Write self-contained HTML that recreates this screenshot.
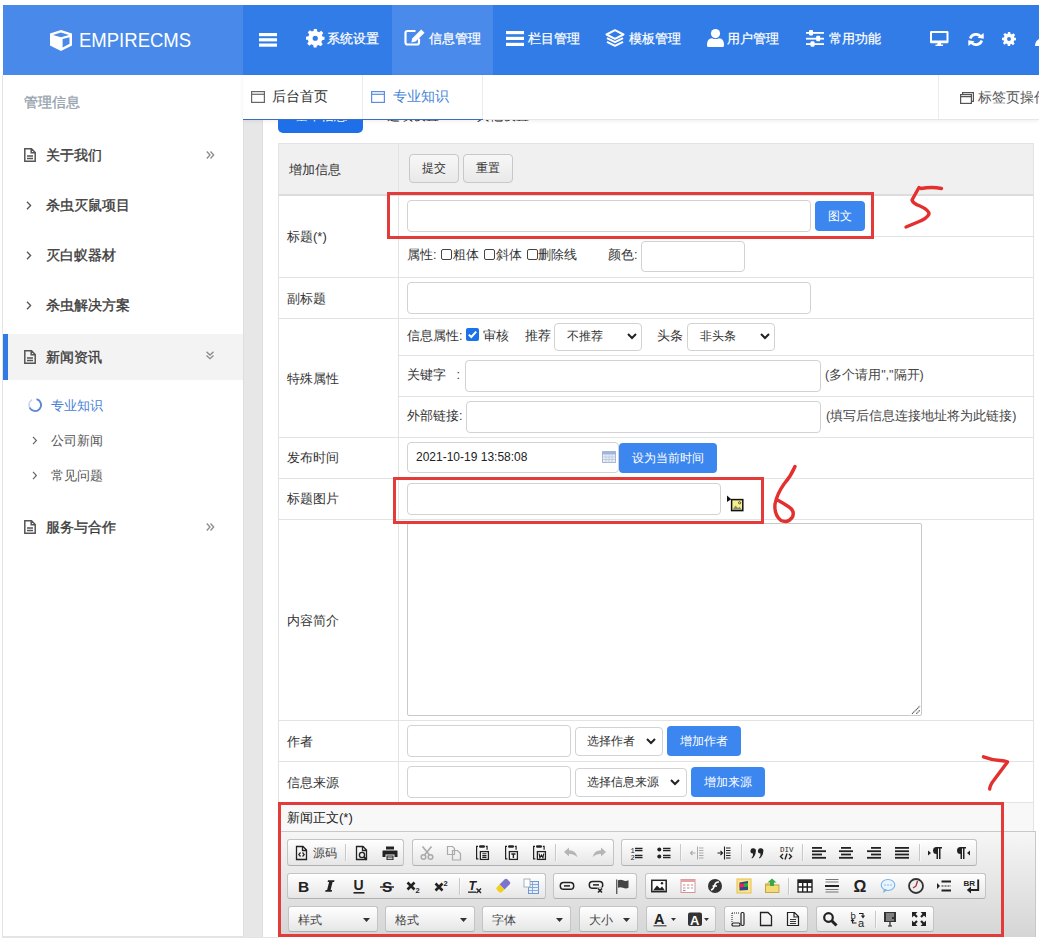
<!DOCTYPE html>
<html><head><meta charset="utf-8">
<style>
*{box-sizing:border-box;margin:0;padding:0}
html,body{width:1039px;height:940px;overflow:hidden;background:#fff;font-family:"Liberation Sans",sans-serif;color:#333}
.a{position:absolute}
svg{position:absolute;overflow:visible}
#hdr{left:3px;top:5px;width:1036px;height:70px;background:#317ce6}
#logo{left:3px;top:5px;width:240px;height:70px;background:#4989ea}
.nav{position:absolute;color:#fff;font-size:13px;top:31px;line-height:15px;white-space:nowrap;-webkit-text-stroke:0.25px #fff}
#act{left:392px;top:5px;width:101px;height:70px;background:#4a8aea}
#side{left:2px;top:75px;width:241px;height:862px;background:#fff;border-left:1px solid #e4e4e4;border-bottom:1px solid #e4e4e4}
#gap{left:243px;top:120px;width:20px;height:817px;background:#e7e7e7;box-shadow:inset 1px 0 0 #dedede,inset -1px 0 0 #dedede}
#tabs{left:243px;top:75px;width:796px;height:45px;background:#fff;border-bottom:1px solid #e6e6e6;box-shadow:0 1px 4px rgba(0,0,0,.07)}
.s1{position:absolute;font-size:14px;font-weight:normal;-webkit-text-stroke:0.35px #3a3a3a;color:#3a3a3a;line-height:16px;white-space:nowrap}
.s2{position:absolute;font-size:13px;color:#555;line-height:15px;white-space:nowrap}
.lbl{position:absolute;font-size:13px;color:#333;line-height:15px;white-space:nowrap}
.inp{position:absolute;border:1px solid #d2d2d2;border-radius:4px;background:#fff}
.btn{position:absolute;background:#3c86f0;color:#fff;border-radius:4px;font-size:12px;text-align:center;white-space:nowrap}
.hl{position:absolute;background:#e3e3e3;height:1px}
.vl{position:absolute;background:#e3e3e3;width:1px}
.red{position:absolute;border:3px solid #e33a3a}
.tg{position:absolute;border:1px solid #c4c4c4;border-bottom-color:#b0b0b0;border-radius:3px;background:linear-gradient(#fff,#e6e6e6);box-shadow:0 1px 0 rgba(255,255,255,.6) inset}
.ts{position:absolute;width:1px;height:17px;background:#c8c8c8;box-shadow:1px 0 0 rgba(255,255,255,.5)}
.tc{position:absolute;border:1px solid #c4c4c4;border-bottom-color:#b0b0b0;border-radius:3px;background:linear-gradient(#fff,#e6e6e6)}
</style></head><body>
<!-- header -->
<div class="a" id="hdr"></div>
<div class="a" id="logo"></div>
<div class="a" id="act"></div>
<svg style="left:50px;top:29.5px" width="22" height="21" viewBox="0 0 22 21"><path fill="#fff" fill-rule="evenodd" d="M11 0L22 3.5V15.5L11 21L0 15.5V3.5ZM3 5L11 2.4L19 5L11 7.2ZM12.6 9L19.5 7.2V13.8L12.6 17.4Z"/></svg>
<div class="a" style="left:79px;top:28.5px;font-size:19.6px;line-height:22px;color:#fff;transform:scaleX(0.945);transform-origin:0 0">EMPIRECMS</div>
<!-- hamburger -->
<svg style="left:259px;top:33px" width="18" height="14"><rect x="0" y="0" width="18" height="3.2" fill="#fff"/><rect x="0" y="5.2" width="18" height="3.2" fill="#fff"/><rect x="0" y="10.5" width="18" height="3.2" fill="#fff"/></svg>
<!-- gear -->
<svg style="left:305.5px;top:28.5px" width="18.5" height="18.5" viewBox="0 0 24 24"><path fill="#fff" fill-rule="evenodd" d="M10 0h4l.6 3.2a9 9 0 0 1 2.4 1l2.7-1.9 2.8 2.8-1.9 2.7a9 9 0 0 1 1 2.4L24 10v4l-3.2.6a9 9 0 0 1-1 2.4l1.9 2.7-2.8 2.8-2.7-1.9a9 9 0 0 1-2.4 1L14 24h-4l-.6-3.2a9 9 0 0 1-2.4-1l-2.7 1.9-2.8-2.8 1.9-2.7a9 9 0 0 1-1-2.4L0 14v-4l3.2-.6a9 9 0 0 1 1-2.4L2.3 4.3 5.1 1.5 7.8 3.4a9 9 0 0 1 2.4-1ZM12 8.6a3.4 3.4 0 1 0 0 6.8a3.4 3.4 0 1 0 0-6.8Z"/></svg>
<div class="nav" style="left:327px">系统设置</div>
<!-- edit -->
<svg style="left:404px;top:28.5px" width="22" height="17" viewBox="0 0 22 17"><path fill="none" stroke="#fff" stroke-width="2.2" d="M11.5 2H3.5Q1.5 2 1.5 4V13.5Q1.5 15.5 3.5 15.5H13Q15 15.5 15 13.5V9.5"/><path fill="#fff" d="M17.2 0.6L20.6 3.8L11.6 12.6L7.4 13.4L8.2 9.4Z"/></svg>
<div class="nav" style="left:429px">信息管理</div>
<!-- bars -->
<svg style="left:506px;top:30.5px" width="18" height="15"><rect x="0" y="0" width="18" height="3.2" fill="#fff"/><rect x="0" y="5.8" width="18" height="3.2" fill="#fff"/><rect x="0" y="11.8" width="18" height="3.2" fill="#fff"/></svg>
<div class="nav" style="left:527.5px">栏目管理</div>
<!-- layers -->
<svg style="left:605px;top:28.5px" width="20" height="18" viewBox="0 0 20 18"><path fill="none" stroke="#fff" stroke-width="2" stroke-linejoin="round" d="M10 1.2L18.5 5.5L10 9.8L1.5 5.5Z"/><path fill="none" stroke="#fff" stroke-width="2" stroke-linejoin="round" d="M2 9.2L10 13.2L18 9.2"/><path fill="none" stroke="#fff" stroke-width="2" stroke-linejoin="round" d="M2 12.8L10 16.8L18 12.8"/></svg>
<div class="nav" style="left:629px">模板管理</div>
<!-- user -->
<svg style="left:706.5px;top:28.5px" width="17" height="18" viewBox="0 0 17 18"><circle cx="8.5" cy="4.6" r="4.6" fill="#fff"/><path fill="#fff" d="M0 15.5Q0 9.5 5 9.2Q8.5 11 12 9.2Q17 9.5 17 15.5V16.5Q17 18 15.5 18H1.5Q0 18 0 16.5Z"/></svg>
<div class="nav" style="left:727px">用户管理</div>
<!-- sliders -->
<svg style="left:806px;top:29px" width="18" height="18" viewBox="0 0 18 18"><rect x="0" y="3" width="18" height="1.8" fill="#fff"/><rect x="0" y="8.8" width="18" height="1.8" fill="#fff"/><rect x="0" y="14.2" width="18" height="1.8" fill="#fff"/><rect x="3" y="1" width="4" height="5.5" rx="1" fill="#fff"/><rect x="10.2" y="6.8" width="4" height="5.5" rx="1" fill="#fff"/><rect x="4.5" y="12.3" width="4" height="5.5" rx="1" fill="#fff"/></svg>
<div class="nav" style="left:829px">常用功能</div>
<!-- monitor -->
<svg style="left:930px;top:31px" width="19" height="15" viewBox="0 0 19 15"><path fill="#fff" fill-rule="evenodd" d="M1.2 0H17.3Q18.5 0 18.5 1.2V11Q18.5 12.2 17.3 12.2H1.2Q0 12.2 0 11V1.2Q0 0 1.2 0ZM2 2V9.6H16.5V2Z"/><path fill="#fff" d="M7.5 12H11V13.4H13V15H5.5V13.4H7.5Z"/></svg>
<!-- refresh -->
<svg style="left:967.5px;top:32.5px" width="16" height="13" viewBox="0 0 16 13"><path fill="none" stroke="#fff" stroke-width="2.6" d="M2.2 5.5A6 6 0 0 1 13 4.2"/><path fill="#fff" d="M9.5 4.8L15.8 5.8L15.6 0Z"/><path fill="none" stroke="#fff" stroke-width="2.6" d="M13.8 7.5A6 6 0 0 1 3 8.8"/><path fill="#fff" d="M6.5 8.2L0.2 7.2L0.4 13Z"/></svg>
<!-- gear2 -->
<svg style="left:1002px;top:32px" width="14" height="14" viewBox="0 0 24 24"><path fill="#fff" fill-rule="evenodd" d="M10 0h4l.6 3.2a9 9 0 0 1 2.4 1l2.7-1.9 2.8 2.8-1.9 2.7a9 9 0 0 1 1 2.4L24 10v4l-3.2.6a9 9 0 0 1-1 2.4l1.9 2.7-2.8 2.8-2.7-1.9a9 9 0 0 1-2.4 1L14 24h-4l-.6-3.2a9 9 0 0 1-2.4-1l-2.7 1.9-2.8-2.8 1.9-2.7a9 9 0 0 1-1-2.4L0 14v-4l3.2-.6a9 9 0 0 1 1-2.4L2.3 4.3 5.1 1.5 7.8 3.4a9 9 0 0 1 2.4-1ZM12 8.6a3.4 3.4 0 1 0 0 6.8a3.4 3.4 0 1 0 0-6.8Z"/></svg>
<svg style="left:1035px;top:39px" width="4" height="7"><path fill="#fff" d="M4 0V7H0Q0 2 4 0Z"/></svg>

<!-- SIDEBAR -->
<div class="a" id="side"></div>
<div class="a" id="gap"></div>
<div class="a" style="left:2px;top:937px;width:277px;height:1px;background:#e4e4e4"></div>

<div class="a" style="left:24px;top:94px;font-size:14px;font-weight:normal;-webkit-text-stroke:0.35px #97a3ae;color:#97a3ae;line-height:16px">管理信息</div>
<!-- doc icon -->
<svg style="left:24px;top:148px" width="12" height="14" viewBox="0 0 12 14"><path fill="none" stroke="#555" stroke-width="1.5" d="M0.8 0.8H7.5L11.2 4.5V13.2H0.8Z M7.2 0.8V4.8H11.2"/><path stroke="#555" stroke-width="1.3" d="M3 8H9M3 10.5H9"/></svg>
<div class="s1" style="left:46px;top:147px">关于我们</div>
<svg style="left:206px;top:151px" width="9" height="8" viewBox="0 0 9 8"><path fill="none" stroke="#8a8a8a" stroke-width="1.3" d="M0.8 0.5L4 4L0.8 7.5M4.5 0.5L7.7 4L4.5 7.5"/></svg>
<svg style="left:26px;top:201px" width="6" height="9" viewBox="0 0 6 9"><path fill="none" stroke="#555" stroke-width="1.3" d="M1 0.8L4.6 4.5L1 8.2"/></svg>
<div class="s1" style="left:46px;top:197px">杀虫灭鼠项目</div>
<svg style="left:26px;top:251px" width="6" height="9" viewBox="0 0 6 9"><path fill="none" stroke="#555" stroke-width="1.3" d="M1 0.8L4.6 4.5L1 8.2"/></svg>
<div class="s1" style="left:46px;top:247px">灭白蚁器材</div>
<svg style="left:26px;top:301px" width="6" height="9" viewBox="0 0 6 9"><path fill="none" stroke="#555" stroke-width="1.3" d="M1 0.8L4.6 4.5L1 8.2"/></svg>
<div class="s1" style="left:46px;top:297px">杀虫解决方案</div>
<div class="a" style="left:3px;top:334px;width:240px;height:46px;background:#f3f3f3"></div>
<div class="a" style="left:3px;top:334px;width:5px;height:46px;background:#2f7ae5"></div>
<svg style="left:24px;top:350px" width="12" height="14" viewBox="0 0 12 14"><path fill="none" stroke="#555" stroke-width="1.5" d="M0.8 0.8H7.5L11.2 4.5V13.2H0.8Z M7.2 0.8V4.8H11.2"/><path stroke="#555" stroke-width="1.3" d="M3 8H9M3 10.5H9"/></svg>
<div class="s1" style="left:46px;top:349px">新闻资讯</div>
<svg style="left:206px;top:351px" width="8" height="9" viewBox="0 0 8 9"><path fill="none" stroke="#8a8a8a" stroke-width="1.3" d="M0.5 0.8L4 4L7.5 0.8M0.5 4.5L4 7.7L7.5 4.5"/></svg>
<svg style="left:28px;top:398px" width="14" height="14" viewBox="0 0 14 14"><path fill="none" stroke="#c9d6f0" stroke-width="1.8" d="M1.6 9.5A6 6 0 0 1 4.2 1.8"/><path fill="none" stroke="#5b86d8" stroke-width="1.8" d="M8.5 1.2A6 6 0 1 1 1.6 9.5"/></svg>
<div class="s2" style="left:51px;top:398px;color:#4a80d8">专业知识</div>
<svg style="left:32px;top:436px" width="6" height="9" viewBox="0 0 6 9"><path fill="none" stroke="#666" stroke-width="1.2" d="M1 0.8L4.4 4.5L1 8.2"/></svg>
<div class="s2" style="left:51px;top:433px">公司新闻</div>
<svg style="left:32px;top:471px" width="6" height="9" viewBox="0 0 6 9"><path fill="none" stroke="#666" stroke-width="1.2" d="M1 0.8L4.4 4.5L1 8.2"/></svg>
<div class="s2" style="left:51px;top:468px">常见问题</div>
<svg style="left:24px;top:520px" width="12" height="14" viewBox="0 0 12 14"><path fill="none" stroke="#555" stroke-width="1.5" d="M0.8 0.8H7.5L11.2 4.5V13.2H0.8Z M7.2 0.8V4.8H11.2"/><path stroke="#555" stroke-width="1.3" d="M3 8H9M3 10.5H9"/></svg>
<div class="s1" style="left:46px;top:519px">服务与合作</div>
<svg style="left:206px;top:523px" width="9" height="8" viewBox="0 0 9 8"><path fill="none" stroke="#8a8a8a" stroke-width="1.3" d="M0.8 0.5L4 4L0.8 7.5M4.5 0.5L7.7 4L4.5 7.5"/></svg>
<!-- TABS -->
<div class="a" id="tabs"></div>

<svg style="left:251px;top:90.5px" width="14" height="12" viewBox="0 0 14 12"><rect x="0.6" y="0.6" width="12.8" height="10.8" fill="none" stroke="#666" stroke-width="1.2"/><path stroke="#666" stroke-width="1.2" d="M0.6 3.3H13.4"/></svg>
<div class="a" style="left:272px;top:88px;font-size:14px;line-height:16px;color:#333">后台首页</div>
<div class="a" style="left:362px;top:75px;width:1px;height:44px;background:#ececec"></div>
<svg style="left:371px;top:90.5px" width="14" height="12" viewBox="0 0 14 12"><rect x="0.6" y="0.6" width="12.8" height="10.8" fill="none" stroke="#5b8ee0" stroke-width="1.2"/><path stroke="#5b8ee0" stroke-width="1.2" d="M0.6 3.3H13.4"/></svg>
<div class="a" style="left:393px;top:88px;font-size:14px;line-height:16px;color:#4a85d8">专业知识</div>
<div class="a" style="left:482px;top:75px;width:1px;height:44px;background:#ececec"></div>
<div class="a" style="left:938px;top:75px;width:1px;height:44px;background:#ececec"></div>
<svg style="left:960px;top:91.5px" width="14" height="12" viewBox="0 0 14 12"><rect x="0.6" y="2.6" width="10.8" height="8.8" fill="none" stroke="#555" stroke-width="1.2"/><path fill="none" stroke="#555" stroke-width="1.2" d="M2.6 2.6V0.6H13.4V9.4H11.4M0.6 4.6H11.4"/></svg>
<div class="a" style="left:978px;top:89px;font-size:14px;line-height:16px;color:#555;white-space:nowrap">标签页操作</div>
<div class="a" style="left:243px;top:119px;width:240px;height:1px;background:#3c6cc4"></div>

<!-- CONTENT -->

<!-- partially hidden form tabs -->
<div class="a" style="left:278px;top:120px;width:85px;height:13px;background:#1f6fe9;border-radius:0 0 5px 5px"></div>
<div class="a" style="left:263px;top:120px;width:776px;height:4px;overflow:hidden">
<div class="a" style="left:32px;top:-11px;font-size:12.5px;line-height:14px;color:#fff;white-space:nowrap">基本信息</div>
<div class="a" style="left:124px;top:-11px;font-size:12.5px;line-height:14px;color:#222;white-space:nowrap">选项设置</div>
<div class="a" style="left:214px;top:-11px;font-size:12.5px;line-height:14px;color:#222;white-space:nowrap">其他设置</div>
</div>
<!-- table frame -->
<div class="a" style="left:278px;top:143px;width:756px;height:660px;border:1px solid #e3e3e3;border-bottom:none"></div>
<div class="a" style="left:279px;top:144px;width:754px;height:51px;background:#f0f0f0"></div>
<div class="vl" style="left:398px;top:144px;height:658px"></div>
<div class="hl" style="left:279px;top:194px;width:754px;height:2px;background:#dcdcdc"></div>
<div class="hl" style="left:399px;top:236px;width:634px"></div>
<div class="hl" style="left:279px;top:277px;width:754px"></div>
<div class="hl" style="left:279px;top:318px;width:754px"></div>
<div class="hl" style="left:399px;top:355px;width:634px"></div>
<div class="hl" style="left:399px;top:396px;width:634px"></div>
<div class="hl" style="left:279px;top:437px;width:754px"></div>
<div class="hl" style="left:279px;top:478px;width:754px"></div>
<div class="hl" style="left:279px;top:519px;width:754px"></div>
<div class="hl" style="left:279px;top:720px;width:754px"></div>
<div class="hl" style="left:279px;top:761px;width:754px"></div>
<div class="hl" style="left:279px;top:802px;width:754px"></div>
<!-- labels -->
<div class="lbl" style="left:289px;top:162px">增加信息</div>
<div class="lbl" style="left:287px;top:229px">标题(*)</div>
<div class="lbl" style="left:287px;top:291px">副标题</div>
<div class="lbl" style="left:287px;top:371px">特殊属性</div>
<div class="lbl" style="left:287px;top:450px">发布时间</div>
<div class="lbl" style="left:287px;top:491px">标题图片</div>
<div class="lbl" style="left:287px;top:613px">内容简介</div>
<div class="lbl" style="left:287px;top:734px">作者</div>
<div class="lbl" style="left:287px;top:775px">信息来源</div>
<!-- row1 buttons -->
<div class="a" style="left:409px;top:154px;width:50px;height:29px;border:1px solid #c8c8c8;border-radius:4px;background:linear-gradient(#f7f7f7,#e9e9e9);font-size:12px;line-height:27px;text-align:center;color:#333">提交</div>
<div class="a" style="left:463px;top:154px;width:50px;height:29px;border:1px solid #c8c8c8;border-radius:4px;background:linear-gradient(#f7f7f7,#e9e9e9);font-size:12px;line-height:27px;text-align:center;color:#333">重置</div>
<!-- title -->
<div class="inp" style="left:407px;top:200px;width:404px;height:32px"></div>
<div class="btn" style="left:815px;top:201px;width:50px;height:30px;line-height:30px">图文</div>
<div class="lbl" style="left:407px;top:248px;font-size:12.5px">属性:</div>
<div class="a" style="left:441px;top:249px;width:11px;height:11px;border:1px solid #444;border-radius:2px"></div>
<div class="lbl" style="left:453px;top:248px;font-size:12.5px">粗体</div>
<div class="a" style="left:484px;top:249px;width:11px;height:11px;border:1px solid #444;border-radius:2px"></div>
<div class="lbl" style="left:496px;top:248px;font-size:12.5px">斜体</div>
<div class="a" style="left:527px;top:249px;width:11px;height:11px;border:1px solid #444;border-radius:2px"></div>
<div class="lbl" style="left:538px;top:248px;font-size:12.5px">删除线</div>
<div class="lbl" style="left:608px;top:248px;font-size:12.5px">颜色:</div>
<div class="inp" style="left:641px;top:241px;width:104px;height:31px"></div>
<!-- subtitle -->
<div class="inp" style="left:407px;top:282px;width:404px;height:32px"></div>
<!-- special -->
<div class="lbl" style="left:407px;top:329px;font-size:12.5px">信息属性:</div>
<div class="a" style="left:466px;top:328px;width:13px;height:13px;background:#1a73e8;border-radius:2px"></div>
<svg style="left:466px;top:328px" width="13" height="13" viewBox="0 0 13 13"><path fill="none" stroke="#fff" stroke-width="2" d="M2.8 6.6L5.3 9L10.2 3.6"/></svg>
<div class="lbl" style="left:483px;top:329px;font-size:12.5px">审核</div>
<div class="lbl" style="left:525px;top:329px;font-size:12.5px">推荐</div>
<div class="inp" style="left:554px;top:323px;width:88px;height:28px"></div>
<div class="lbl" style="left:567px;top:329px;font-size:12px">不推荐</div>
<svg style="left:627px;top:333px" width="10" height="7" viewBox="0 0 10 7"><path fill="none" stroke="#222" stroke-width="2" d="M1 1L5 5L9 1"/></svg>
<div class="lbl" style="left:657px;top:329px;font-size:12.5px">头条</div>
<div class="inp" style="left:687px;top:323px;width:88px;height:28px"></div>
<div class="lbl" style="left:700px;top:329px;font-size:12px">非头条</div>
<svg style="left:760px;top:333px" width="10" height="7" viewBox="0 0 10 7"><path fill="none" stroke="#222" stroke-width="2" d="M1 1L5 5L9 1"/></svg>
<div class="lbl" style="left:407px;top:368px;font-size:12.5px">关键字&nbsp;&nbsp;&nbsp;:</div>
<div class="inp" style="left:465px;top:360px;width:356px;height:32px"></div>
<div class="lbl" style="left:825px;top:368px;font-size:12.5px;color:#444">(多个请用","隔开)</div>
<div class="lbl" style="left:407px;top:409px;font-size:12.5px">外部链接:</div>
<div class="inp" style="left:466px;top:401px;width:355px;height:32px"></div>
<div class="lbl" style="left:826px;top:409px;font-size:12.5px;color:#444">(填写后信息连接地址将为此链接)</div>
<!-- date -->
<div class="inp" style="left:407px;top:442px;width:212px;height:31px"></div>
<div class="lbl" style="left:416px;top:450px;font-size:12px;color:#222">2021-10-19 13:58:08</div>
<svg style="left:602px;top:451px" width="14" height="12" viewBox="0 0 14 12"><rect x="0.5" y="0.5" width="13" height="11" fill="#e8eef8" stroke="#a9b9d6"/><rect x="0.5" y="0.5" width="13" height="3" fill="#9fb5dc"/><path stroke="#b8c6de" stroke-width="0.8" d="M1 6H13M1 8.5H13M4 4V11M7 4V11M10 4V11"/></svg>
<div class="btn" style="left:619px;top:443px;width:98px;height:30px;line-height:30px">设为当前时间</div>
<!-- title pic -->
<div class="inp" style="left:407px;top:483px;width:314px;height:32px"></div>
<svg style="left:726px;top:495px" width="18" height="17" viewBox="0 0 18 17"><path fill="#111" d="M1 0.5L5.2 4.2L1 7Z"/><rect x="5.6" y="4.6" width="11.2" height="11" fill="#f4ef8e" stroke="#111" stroke-width="1.5"/><path fill="#8a8a70" d="M6.5 14.8L9.5 10.5L12 13L13.5 11.8L16 14.8Z"/><circle cx="13.6" cy="7.8" r="1.1" fill="none" stroke="#333" stroke-width="0.8"/></svg>
<!-- textarea -->
<div class="inp" style="left:407px;top:523px;width:515px;height:193px;border-radius:2px;border-color:#c9c9c9"></div>
<svg style="left:911px;top:705px" width="10" height="10" viewBox="0 0 10 10"><path stroke="#555" stroke-width="1.1" stroke-dasharray="1.2 0.6" d="M1 8.8L9 1M5.3 8.8L9 5.1"/></svg>
<!-- author -->
<div class="inp" style="left:407px;top:725px;width:164px;height:32px"></div>
<div class="inp" style="left:575px;top:727px;width:88px;height:29px"></div>
<div class="lbl" style="left:587px;top:734px;font-size:12px">选择作者</div>
<svg style="left:646px;top:738px" width="10" height="7" viewBox="0 0 10 7"><path fill="none" stroke="#222" stroke-width="2" d="M1 1L5 5L9 1"/></svg>
<div class="btn" style="left:667px;top:726px;width:74px;height:30px;line-height:30px">增加作者</div>
<!-- source -->
<div class="inp" style="left:407px;top:766px;width:164px;height:32px"></div>
<div class="inp" style="left:575px;top:768px;width:112px;height:29px"></div>
<div class="lbl" style="left:587px;top:775px;font-size:12px">选择信息来源</div>
<svg style="left:670px;top:779px" width="10" height="7" viewBox="0 0 10 7"><path fill="none" stroke="#222" stroke-width="2" d="M1 1L5 5L9 1"/></svg>
<div class="btn" style="left:691px;top:767px;width:74px;height:30px;line-height:30px">增加来源</div>
<!-- news body -->
<div class="a" style="left:279px;top:803px;width:754px;height:29px;background:#f8f8f8"></div>
<div class="vl" style="left:1033px;top:803px;height:29px"></div>
<div class="lbl" style="left:287px;top:810px;color:#222">新闻正文(*)</div>
<div class="a" id="ed" style="left:279px;top:831px;width:757px;height:106px;border-top:1px solid #c8c8c8;border-right:1px solid #c8c8c8;background:linear-gradient(#f6f6f6,#d5d5d5)"></div>
<div class="tg" style="left:287px;top:839px;width:117px;height:27px"></div>
<svg style="left:293.5px;top:845.0px" width="16" height="16" viewBox="0 0 16 16"><path fill="none" stroke="#222" stroke-width="1.3"  d="M2.5 1.5H9L12.5 5V14.5H2.5Z M8.5 1.5V5.5H12.5"/><path fill="none" stroke="#222" stroke-width="1.2"  d="M6.5 7.5L4.8 9.5L6.5 11.5M8.5 7.5L10.2 9.5L8.5 11.5"/></svg>
<div class="a" style="left:313px;top:846px;font-size:12px;line-height:14px;color:#444">源码</div>
<div class="ts" style="left:345px;top:844px"></div>
<svg style="left:353.5px;top:845.0px" width="16" height="16" viewBox="0 0 16 16"><path fill="none" stroke="#222" stroke-width="1.3"  d="M2.5 1.5H9L12.5 5V14.5H2.5Z M8.5 1.5V5.5H12.5"/><circle cx="8" cy="10" r="2.6" fill="none" stroke="#222" stroke-width="1.4"/><path fill="none" stroke="#222" stroke-width="1.8"  d="M10 12L12.5 14.5"/></svg>
<svg style="left:382.0px;top:845.0px" width="16" height="16" viewBox="0 0 16 16"><path fill="#222" d="M4 1.5H12V4.5H4Z"/><path fill="#222" d="M1 5.5H15Q15.5 5.5 15.5 6.5V12H12.5V9.5H3.5V12H0.5V6.5Q0.5 5.5 1 5.5Z"/><path fill="#222" d="M4.5 10.5H11.5V15H4.5Z"/><path fill="none" stroke="#fff" stroke-width="0.9"  d="M5.5 12H10.5M5.5 13.7H10.5"/></svg>
<div class="tg" style="left:411.5px;top:839px;width:202.0px;height:27px"></div>
<svg style="left:418.5px;top:845.0px" width="16" height="16" viewBox="0 0 16 16"><circle cx="4.5" cy="12" r="2.3" fill="none" stroke="#aaa" stroke-width="1.5"/><circle cx="11.5" cy="12" r="2.3" fill="none" stroke="#aaa" stroke-width="1.5"/><path fill="none" stroke="#aaa" stroke-width="1.6"  d="M3.5 1.5L10.5 10M12.5 1.5L5.5 10"/></svg>
<svg style="left:445.5px;top:845.0px" width="16" height="16" viewBox="0 0 16 16"><path fill="none" stroke="#aaa" stroke-width="1.2"  d="M1.5 1.5H6.5L8.5 3.5V9.5H1.5Z"/><path fill="none" stroke="#aaa" stroke-width="1.2"  d="M6.5 5.5H11.5L14.5 8.5V15H6.5Z"/></svg>
<svg style="left:474.3px;top:845.0px" width="16" height="16" viewBox="0 0 16 16"><path fill="none" stroke="#222" stroke-width="1.2"  d="M4 1.3H2.6V13.9H4.4"/><rect x="5" y="0.2" width="6" height="2.6" rx="1.2" fill="#222"/><path fill="none" stroke="#222" stroke-width="1.2"  d="M11.8 1.3H13.1V4.8"/><rect x="6.4" y="6.6" width="8" height="7.8" fill="#fff" stroke="#222" stroke-width="1.3"/><path fill="none" stroke="#222" stroke-width="1.1"  d="M8.3 8.8H12.5M8.3 10.6H12.5M8.3 12.4H12.5"/></svg>
<svg style="left:503.0px;top:845.0px" width="16" height="16" viewBox="0 0 16 16"><path fill="none" stroke="#222" stroke-width="1.2"  d="M4 1.3H2.6V13.9H4.4"/><rect x="5" y="0.2" width="6" height="2.6" rx="1.2" fill="#222"/><path fill="none" stroke="#222" stroke-width="1.2"  d="M11.8 1.3H13.1V4.8"/><rect x="6.4" y="6.6" width="8" height="7.8" fill="#fff" stroke="#222" stroke-width="1.3"/><path fill="none" stroke="#222" stroke-width="1.5"  d="M8.3 8.9H12.5M10.4 8.9V13"/></svg>
<svg style="left:530.5px;top:845.0px" width="16" height="16" viewBox="0 0 16 16"><path fill="none" stroke="#222" stroke-width="1.2"  d="M4 1.3H2.6V13.9H4.4"/><rect x="5" y="0.2" width="6" height="2.6" rx="1.2" fill="#222"/><path fill="none" stroke="#222" stroke-width="1.2"  d="M11.8 1.3H13.1V4.8"/><rect x="6.4" y="6.6" width="8" height="7.8" fill="#fff" stroke="#222" stroke-width="1.3"/><path fill="none" stroke="#222" stroke-width="1.2"  d="M8.1 8.5L8.9 12.8L10.4 10L11.9 12.8L12.7 8.5"/></svg>
<div class="ts" style="left:555px;top:844px"></div>
<svg style="left:563.3px;top:845.0px" width="16" height="16" viewBox="0 0 16 16"><path fill="#b5b5b5" d="M1 7L6 2.5V5.3Q13 5.3 14.5 12.5Q11.5 8.8 6 9V11.5Z"/></svg>
<svg style="left:591.0px;top:845.0px" width="16" height="16" viewBox="0 0 16 16"><path fill="#b5b5b5" d="M15 7L10 2.5V5.3Q3 5.3 1.5 12.5Q4.5 8.8 10 9V11.5Z"/></svg>
<div class="tg" style="left:621px;top:839px;width:356px;height:27px"></div>
<svg style="left:628.0px;top:845.0px" width="16" height="16" viewBox="0 0 16 16"><text x="2.5" y="7.5" font-family="Liberation Mono" font-size="7" font-weight="normal" font-style="normal" fill="#222">1</text><text x="2.5" y="14.5" font-family="Liberation Mono" font-size="7" font-weight="normal" font-style="normal" fill="#222">2</text><path fill="none" stroke="#222" stroke-width="1.3"  d="M7 3.5H14.5M7 5.7H14.5M7 10.5H14.5M7 12.7H14.5"/></svg>
<svg style="left:655.5px;top:845.0px" width="16" height="16" viewBox="0 0 16 16"><circle cx="3.3" cy="4.5" r="2" fill="#222"/><circle cx="3.3" cy="11.5" r="2" fill="#222"/><path fill="none" stroke="#222" stroke-width="1.3"  d="M7 3.5H14.5M7 5.7H14.5M7 10.5H14.5M7 12.7H14.5"/></svg>
<div class="ts" style="left:679.5px;top:844px"></div>
<svg style="left:688.5px;top:845.0px" width="16" height="16" viewBox="0 0 16 16"><path fill="none" stroke="#aaa" stroke-width="1"  d="M8.5 1.5V14.5M10 3H14.5M10 5.5H14.5M10 8H14.5M10 10.5H14.5M10 13H14.5"/><path fill="none" stroke="#aaa" stroke-width="1.1"  d="M1.5 8H6.5M3.5 6L1.5 8L3.5 10"/></svg>
<svg style="left:716.0px;top:845.0px" width="16" height="16" viewBox="0 0 16 16"><path fill="none" stroke="#222" stroke-width="1.1"  d="M8.5 1.5V14.5M10 3H14.5M10 5.5H14.5M10 8H14.5M10 10.5H14.5M10 13H14.5"/><path fill="none" stroke="#222" stroke-width="1.2"  d="M1.5 8H6.5M4.5 6L6.5 8L4.5 10"/></svg>
<div class="ts" style="left:740.5px;top:844px"></div>
<svg style="left:749.0px;top:845.0px" width="16" height="16" viewBox="0 0 16 16"><path fill="#222" d="M1.5 5.5A2.7 2.7 0 1 1 6.8 6.5Q6.5 11 3 13.5L2.5 12.8Q4.5 10.5 4 8.5A2.6 2.6 0 0 1 1.5 5.5Z"/><path fill="#222" d="M9 5.5A2.7 2.7 0 1 1 14.3 6.5Q14 11 10.5 13.5L10 12.8Q12 10.5 11.5 8.5A2.6 2.6 0 0 1 9 5.5Z"/></svg>
<svg style="left:777.5px;top:845.0px" width="16" height="16" viewBox="0 0 16 16"><text x="2" y="7" font-family="Liberation Mono" font-size="7.5" font-weight="normal" font-style="normal" fill="#222">DIV</text><path fill="none" stroke="#222" stroke-width="1.4"  d="M5 9L2.5 11.5L5 14M11 9L13.5 11.5L11 14M9 8.5L7 14.5"/></svg>
<div class="ts" style="left:801.5px;top:844px"></div>
<svg style="left:810.5px;top:845.0px" width="16" height="16" viewBox="0 0 16 16"><rect x="1" y="2" width="10" height="1.8" fill="#222"/><rect x="1" y="5.3" width="14" height="1.8" fill="#222"/><rect x="1" y="8.6" width="10" height="1.8" fill="#222"/><rect x="1" y="11.9" width="14" height="1.8" fill="#222"/></svg>
<svg style="left:838.0px;top:845.0px" width="16" height="16" viewBox="0 0 16 16"><rect x="3" y="2" width="10" height="1.8" fill="#222"/><rect x="1" y="5.3" width="14" height="1.8" fill="#222"/><rect x="3" y="8.6" width="10" height="1.8" fill="#222"/><rect x="1" y="11.9" width="14" height="1.8" fill="#222"/></svg>
<svg style="left:866.0px;top:845.0px" width="16" height="16" viewBox="0 0 16 16"><rect x="5" y="2" width="10" height="1.8" fill="#222"/><rect x="1" y="5.3" width="14" height="1.8" fill="#222"/><rect x="5" y="8.6" width="10" height="1.8" fill="#222"/><rect x="1" y="11.9" width="14" height="1.8" fill="#222"/></svg>
<svg style="left:894.0px;top:845.0px" width="16" height="16" viewBox="0 0 16 16"><rect x="1" y="2" width="14" height="1.8" fill="#222"/><rect x="1" y="5.3" width="14" height="1.8" fill="#222"/><rect x="1" y="8.6" width="14" height="1.8" fill="#222"/><rect x="1" y="11.9" width="14" height="1.8" fill="#222"/></svg>
<div class="ts" style="left:918.5px;top:844px"></div>
<svg style="left:927.0px;top:845.0px" width="16" height="16" viewBox="0 0 16 16"><path fill="#222" d="M1 5.5L4 8L1 10.5Z"/><path fill="#222" d="M9.5 2H15V3.5H13.5V14H12V3.5H11V14H9.5V9Q6 9 6 5.5T9.5 2Z"/></svg>
<svg style="left:954.5px;top:845.0px" width="16" height="16" viewBox="0 0 16 16"><path fill="#222" d="M15 5.5L12 8L15 10.5Z"/><path fill="#222" d="M5.5 2H11V3.5H9.5V14H8V3.5H7V14H5.5V9Q2 9 2 5.5T5.5 2Z"/></svg>
<div class="tg" style="left:287px;top:872.5px;width:258.5px;height:26.5px"></div>
<svg style="left:294.5px;top:878.0px" width="16" height="16" viewBox="0 0 16 16"><text x="3" y="13.8" font-family="Liberation Sans" font-size="15.5" font-weight="bold" font-style="normal" fill="#222">B</text></svg>
<svg style="left:322.0px;top:878.0px" width="16" height="16" viewBox="0 0 16 16"><path fill="#222" d="M6 2.2H12.5L12.1 4H10.6L8.6 12H10.1L9.7 13.8H3.2L3.6 12H5.1L7.1 4H5.6Z"/></svg>
<svg style="left:350.5px;top:878.0px" width="16" height="16" viewBox="0 0 16 16"><text x="2.6" y="12.2" font-family="Liberation Sans" font-size="14" font-weight="bold" font-style="normal" fill="#222">U</text><path fill="#222" d="M2.5 14H13.5V15.6H2.5Z"/></svg>
<svg style="left:378.5px;top:878.0px" width="16" height="16" viewBox="0 0 16 16"><text x="3" y="13.8" font-family="Liberation Sans" font-size="15.5" font-weight="bold" font-style="normal" fill="#222">S</text><path fill="#222" d="M1 8.3H15V9.7H1Z"/></svg>
<svg style="left:405.8px;top:878.0px" width="16" height="16" viewBox="0 0 16 16"><path fill="none" stroke="#222" stroke-width="2.6"  d="M1.5 4.5L8.5 11.5M8.5 4.5L1.5 11.5"/><text x="9.5" y="15" font-family="Liberation Sans" font-size="7.5" font-weight="bold" font-style="normal" fill="#222">2</text></svg>
<svg style="left:433.7px;top:878.0px" width="16" height="16" viewBox="0 0 16 16"><path fill="none" stroke="#222" stroke-width="2.6"  d="M1.5 5.5L8.5 12.5M8.5 5.5L1.5 12.5"/><text x="9.5" y="7.5" font-family="Liberation Sans" font-size="7.5" font-weight="bold" font-style="normal" fill="#222">2</text></svg>
<div class="ts" style="left:458.5px;top:877.5px"></div>
<svg style="left:466.5px;top:878.0px" width="16" height="16" viewBox="0 0 16 16"><text x="1.5" y="11.5" font-family="Liberation Sans" font-size="12.5" font-weight="bold" font-style="italic" fill="#222">T</text><path fill="#222" d="M1 13.5H9V14.8H1Z"/><path fill="none" stroke="#222" stroke-width="1.4"  d="M9.5 10.5L14 15M14 10.5L9.5 15"/></svg>
<svg style="left:495.0px;top:878.0px" width="16" height="16" viewBox="0 0 16 16"><path fill="#7d74cc" d="M9.5 1.5Q11 0 12.5 1.5L14.5 3.5Q16 5 14.5 6.5L9.5 11.5L4.5 6.5Z"/><path fill="#f0d21e" d="M4.5 6.5L9.5 11.5L7 14Q5.5 15.5 4 14L2 12Q0.5 10.5 2 9Z"/></svg>
<svg style="left:523.0px;top:878.0px" width="16" height="16" viewBox="0 0 16 16"><rect x="5.5" y="3.5" width="10" height="12" fill="#e9f0fb" stroke="#6f98d0" stroke-width="1"/><path fill="none" stroke="#7fa3d6" stroke-width="0.9"  d="M5.5 6.5H15.5M5.5 9.5H15.5M5.5 12.5H15.5M9.5 3.5V15.5"/><rect x="1" y="1" width="6" height="8" fill="#fff" stroke="#9ab" stroke-width="0.9"/></svg>
<div class="tg" style="left:552.5px;top:872.5px;width:84.5px;height:26.5px"></div>
<svg style="left:559.0px;top:878.0px" width="16" height="16" viewBox="0 0 16 16"><rect x="1.3" y="4.6" width="13.4" height="6.6" rx="3.3" fill="none" stroke="#222" stroke-width="1.5"/><path fill="none" stroke="#222" stroke-width="1.5"  d="M5 7.9H11"/></svg>
<svg style="left:588.0px;top:878.0px" width="16" height="16" viewBox="0 0 16 16"><rect x="1.3" y="3.6" width="13.4" height="6.6" rx="3.3" fill="none" stroke="#222" stroke-width="1.5"/><path fill="none" stroke="#222" stroke-width="1.5"  d="M5 6.9H11"/><path fill="#f2f2f2" d="M9.5 9.5H15V15H9.5Z"/><path fill="none" stroke="#222" stroke-width="1.7"  d="M10 10.5L14 14.5M14 10.5L10 14.5"/></svg>
<svg style="left:614.0px;top:878.0px" width="16" height="16" viewBox="0 0 16 16"><path fill="#222" d="M2.3 1.5H3.3V16H2.3Z"/><path fill="#444" d="M4 2.3Q6.5 1 9 2.3T14.5 2.3V9.8Q12 11 9 9.8T4 9.8Z"/></svg>
<div class="tg" style="left:644.5px;top:872.5px;width:341.5px;height:26.5px"></div>
<svg style="left:651.0px;top:878.0px" width="16" height="16" viewBox="0 0 16 16"><rect x="0.8" y="2.3" width="14.4" height="11.4" fill="#fff" stroke="#222" stroke-width="1.5"/><path fill="#222" d="M2 12.5L6 7.5L9 10.5L11 8.5L14 12.5Z"/><circle cx="11" cy="5.3" r="1.2" fill="#222"/></svg>
<svg style="left:680.0px;top:878.0px" width="16" height="16" viewBox="0 0 16 16"><rect x="1" y="1.5" width="14" height="13" fill="#fff" stroke="#c99" stroke-width="1"/><path fill="#e6a3a3" d="M1 1.5H15V4H1Z"/><path fill="none" stroke="#d77" stroke-width="1.2"  d="M3 7H5.5M7 7H9.5M11 7H13"/><path fill="none" stroke="#99b" stroke-width="1.2"  d="M3 10H5.5M7 10H9.5M11 10H13"/><path fill="none" stroke="#d77" stroke-width="1.2"  d="M3 12.5H5.5"/></svg>
<svg style="left:707.0px;top:878.0px" width="16" height="16" viewBox="0 0 16 16"><circle cx="8" cy="8" r="7" fill="#333"/><path fill="none" stroke="#fff" stroke-width="1.5"  d="M12 4Q8.5 3.5 7.5 7.5T4 12M5.5 8H10"/></svg>
<svg style="left:736.0px;top:878.0px" width="16" height="16" viewBox="0 0 16 16"><rect x="1" y="1" width="14" height="14" fill="#fbe48a" stroke="#e8c04a" stroke-width="1"/><path fill="#2b4d8a" d="M3.5 4.5L12 3V12L3.5 12.5Z"/><path fill="#e25" d="M3.5 6L8 5.5V9L3.5 9.5Z"/><path fill="#3a3" d="M8 5.5L12 5V8.5L8 9Z"/></svg>
<svg style="left:763.5px;top:878.0px" width="16" height="16" viewBox="0 0 16 16"><path fill="#e7c95a" d="M1 5H6L7.5 6.5H15V14.5H1Z"/><rect x="1.5" y="7" width="13.5" height="7.5" fill="#f3dc78" stroke="#b89a35" stroke-width="0.8"/><path fill="#3aa847" d="M8 0.5L12.5 4.5H10V8H6V4.5H3.5Z"/></svg>
<div class="ts" style="left:788px;top:877.5px"></div>
<svg style="left:797.0px;top:878.0px" width="16" height="16" viewBox="0 0 16 16"><rect x="1" y="2" width="14" height="12" fill="#fff" stroke="#222" stroke-width="1.4"/><path fill="#222" d="M1 2H15V5H1Z"/><path fill="none" stroke="#222" stroke-width="1.4"  d="M1 9H15M5.7 5V14M10.3 5V14"/></svg>
<svg style="left:824.0px;top:878.0px" width="16" height="16" viewBox="0 0 16 16"><path fill="none" stroke="#666" stroke-width="0.9"  d="M1.5 1.5H14.5M1.5 4H14.5M1.5 11.5H14.5M1.5 14H14.5"/><path fill="#222" d="M1 7H15V9H1Z"/></svg>
<svg style="left:852.5px;top:878.0px" width="16" height="16" viewBox="0 0 16 16"><text x="0.5" y="14" font-family="Liberation Sans" font-size="16" font-weight="bold" font-style="normal" fill="#222">Ω</text></svg>
<svg style="left:880.0px;top:878.0px" width="16" height="16" viewBox="0 0 16 16"><ellipse cx="8" cy="7" rx="6.8" ry="5.5" fill="#eaf4fd" stroke="#76b2e6" stroke-width="1.1"/><path fill="#76b2e6" d="M4 11L3 15L7.5 12Z"/><circle cx="5" cy="7" r="0.8" fill="#76b2e6"/><circle cx="8" cy="7" r="0.8" fill="#76b2e6"/><circle cx="11" cy="7" r="0.8" fill="#76b2e6"/></svg>
<svg style="left:908.0px;top:878.0px" width="16" height="16" viewBox="0 0 16 16"><circle cx="8" cy="8" r="7" fill="#eee" stroke="#333" stroke-width="1.8"/><path fill="none" stroke="#a33" stroke-width="1.3"  d="M8 8L9.5 3M8 8L5 10"/></svg>
<svg style="left:936.0px;top:878.0px" width="16" height="16" viewBox="0 0 16 16"><path fill="#222" d="M1 5L4 8L1 11Z"/><path fill="none" stroke="#222" stroke-width="1.8"  d="M5.5 3.5H15M5.5 12.5H15"/><path fill="none" stroke="#222" stroke-width="1.2" stroke-dasharray="2 1" d="M5.5 8H15"/></svg>
<svg style="left:964.0px;top:878.0px" width="16" height="16" viewBox="0 0 16 16"><text x="-0.5" y="7.5" font-family="Liberation Sans" font-size="8" font-weight="bold" font-style="normal" fill="#222">BR</text><path fill="none" stroke="#222" stroke-width="1.9"  d="M14.2 1.5V12H6"/><path fill="#222" d="M7 8.5L2.8 12L7 15.5Z"/></svg>
<div class="tc" style="left:287.5px;top:905.5px;width:90.0px;height:26.5px"><span style="position:absolute;left:9px;top:6px;font-size:12px;line-height:14px;color:#444">样式</span></div>
<svg style="left:362.5px;top:917.5px" width="7" height="4"><path fill="#333" d="M0 0H7L3.5 4Z"/></svg>
<div class="tc" style="left:384.5px;top:905.5px;width:90.0px;height:26.5px"><span style="position:absolute;left:9px;top:6px;font-size:12px;line-height:14px;color:#444">格式</span></div>
<svg style="left:459.5px;top:917.5px" width="7" height="4"><path fill="#333" d="M0 0H7L3.5 4Z"/></svg>
<div class="tc" style="left:481.5px;top:905.5px;width:89.5px;height:26.5px"><span style="position:absolute;left:9px;top:6px;font-size:12px;line-height:14px;color:#444">字体</span></div>
<svg style="left:556px;top:917.5px" width="7" height="4"><path fill="#333" d="M0 0H7L3.5 4Z"/></svg>
<div class="tc" style="left:578.5px;top:905.5px;width:59.5px;height:26.5px"><span style="position:absolute;left:9px;top:6px;font-size:12px;line-height:14px;color:#444">大小</span></div>
<svg style="left:623px;top:917.5px" width="7" height="4"><path fill="#333" d="M0 0H7L3.5 4Z"/></svg>
<div class="tg" style="left:645.5px;top:905.5px;width:70.5px;height:26.5px"></div>
<svg style="left:652.0px;top:911.0px" width="16" height="16" viewBox="0 0 16 16"><text x="2" y="12.5" font-family="Liberation Sans" font-size="14.5" font-weight="bold" font-style="normal" fill="#222">A</text><path fill="#666" d="M1.5 14H14.5V15.5H1.5Z"/></svg>
<svg style="left:670.5px;top:918px" width="6" height="4"><path fill="#333" d="M0 0H5L2.5 3Z"/></svg>
<svg style="left:687.0px;top:911.0px" width="16" height="16" viewBox="0 0 16 16"><rect x="1" y="1.5" width="14" height="13.5" rx="2" fill="#333"/><text x="3" y="13.5" font-family="Liberation Sans" font-size="13" font-weight="bold" font-style="normal" fill="#fff">A</text></svg>
<svg style="left:704px;top:918px" width="6" height="4"><path fill="#333" d="M0 0H5L2.5 3Z"/></svg>
<div class="tg" style="left:724px;top:905.5px;width:84px;height:26.5px"></div>
<svg style="left:730.0px;top:911.0px" width="16" height="16" viewBox="0 0 16 16"><path fill="none" stroke="#222" stroke-width="1" stroke-dasharray="1 1" d="M2 2H9M2 2V11"/><rect x="11" y="1.5" width="3" height="13" rx="1.2" fill="none" stroke="#222" stroke-width="1.2"/><rect x="2" y="12" width="8" height="3" rx="1.3" fill="none" stroke="#222" stroke-width="1.2"/></svg>
<svg style="left:757.5px;top:911.0px" width="16" height="16" viewBox="0 0 16 16"><path fill="none" stroke="#222" stroke-width="1.3"  d="M2.5 1.5H10L13.5 5V14.5H2.5Z"/></svg>
<svg style="left:785.0px;top:911.0px" width="16" height="16" viewBox="0 0 16 16"><path fill="none" stroke="#222" stroke-width="1.2"  d="M2.5 1.5H9.5L13.5 5.5V14.5H2.5Z M9 1.5V6H13.5"/><path fill="none" stroke="#222" stroke-width="0.9"  d="M5 8.5H11M5 10.5H11M5 12.5H11"/></svg>
<div class="tg" style="left:815.5px;top:905.5px;width:118.0px;height:26.5px"></div>
<svg style="left:822.0px;top:911.0px" width="16" height="16" viewBox="0 0 16 16"><circle cx="6.5" cy="6.5" r="4.3" fill="none" stroke="#222" stroke-width="2.2"/><path fill="none" stroke="#222" stroke-width="3"  d="M9.5 9.5L14.5 14.5"/></svg>
<svg style="left:849.5px;top:911.0px" width="16" height="16" viewBox="0 0 16 16"><text x="0.5" y="8" font-family="Liberation Sans" font-size="9.5" font-weight="normal" font-style="normal" fill="#222">b</text><text x="8" y="16" font-family="Liberation Sans" font-size="11" font-weight="normal" font-style="normal" fill="#222">a</text><path fill="none" stroke="#222" stroke-width="1.1"  d="M9 2.5H13V5.5M11.5 4.5L13 6.5L14.5 4.5"/><path fill="none" stroke="#222" stroke-width="1.1"  d="M6.5 12H2.5V9M1 10L2.5 8.5L4 10"/></svg>
<div class="ts" style="left:874.5px;top:910.5px"></div>
<svg style="left:882.0px;top:911.0px" width="16" height="16" viewBox="0 0 16 16"><path fill="#333" d="M2 1H14V11H2Z"/><path fill="none" stroke="#ddd" stroke-width="0.9"  d="M4 3H12M4 5H12M4 7H10M4 9H12"/><path fill="none" stroke="#222" stroke-width="1.2"  d="M8 11V15M6 15H10"/></svg>
<svg style="left:911.0px;top:911.0px" width="16" height="16" viewBox="0 0 16 16"><path fill="none" stroke="#222" stroke-width="2.2"  d="M2.5 2.5L6 6M13.5 2.5L10 6M2.5 13.5L6 10M13.5 13.5L10 10"/><path fill="#222" d="M1 1H6.5L1 6.5Z"/><path fill="#222" d="M15 1H9.5L15 6.5Z"/><path fill="#222" d="M1 15H6.5L1 9.5Z"/><path fill="#222" d="M15 15H9.5L15 9.5Z"/></svg>
<!-- red boxes -->
<div class="red" style="left:387px;top:192px;width:487px;height:47px"></div>
<div class="red" style="left:393px;top:477px;width:371px;height:47px"></div>
<div class="red" style="left:278px;top:802px;width:726px;height:135px"></div>
<svg style="left:0;top:0" width="1039" height="940"><g fill="none" stroke="#e3302f" stroke-width="3.4" stroke-linecap="round" stroke-linejoin="round">
<path d="M941.5 188.5Q932 186.5 921 188.5L919 187.5L912 200Q913 203.5 920 206Q929 210 929 214Q927 218.5 918 222L906 227"/>
<path d="M795 466.5Q791 476 784 484Q777 494 775 504Q774 515 781 520.5Q788 523.5 792.5 517Q795 511 789 507Q783 503 777.5 500"/>
<path d="M983.5 756.8Q992 760 1000 760.5Q1006 761 1007.5 762Q1000 772 994 780Q990 785 989.7 789"/>
</g></svg>
</body></html>
